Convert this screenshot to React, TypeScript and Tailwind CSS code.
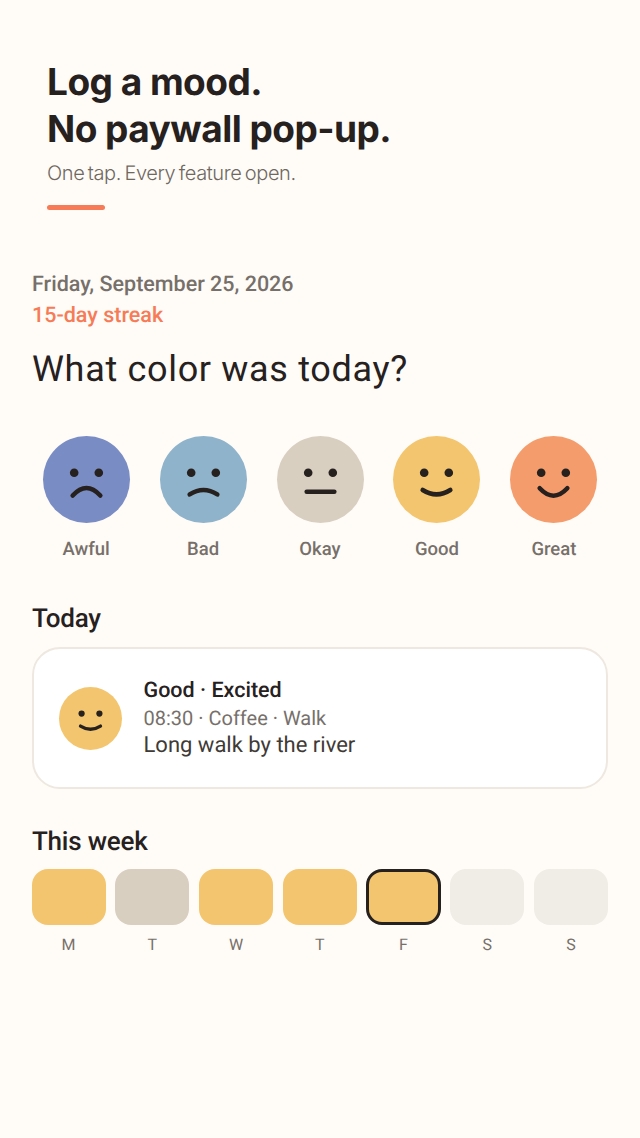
const MOUTHS: Record<string, string> = {
  Awful: "M-13.8 16 Q0 1 13.8 16",
  Bad: "M-13.8 14.9 Q0 6.1 13.8 14.9",
  Okay: "M-13.8 12.3 L13.8 12.3",
  Good: "M-13.8 10.5 Q0 19.3 13.8 10.5",
  Great: "M-13.8 8.8 Q0 23.6 13.8 8.8",
};

function Face({ mood, size }: { mood: string; size: number }) {
  return (
    <svg width={size} height={size} viewBox="-43.5 -43.5 87 87" className="block">
      <circle cx="-12.3" cy="-6.8" r="4.3" fill="#26211E" />
      <circle cx="12.3" cy="-6.8" r="4.3" fill="#26211E" />
      <path d={MOUTHS[mood]} fill="none" stroke="#26211E" strokeWidth="4.6" strokeLinecap="round" />
    </svg>
  );
}

const moods = [
  { name: "Awful", bg: "bg-[#7A8CC4]" },
  { name: "Bad", bg: "bg-[#8FB3CA]" },
  { name: "Okay", bg: "bg-[#D9CFC1]" },
  { name: "Good", bg: "bg-[#F3C56E]" },
  { name: "Great", bg: "bg-[#F49C6C]" },
];

const week = [
  { d: "M", bg: "bg-[#F3C56E]", ring: false },
  { d: "T", bg: "bg-[#D9CFC1]", ring: false },
  { d: "W", bg: "bg-[#F3C56E]", ring: false },
  { d: "T", bg: "bg-[#F3C56E]", ring: false },
  { d: "F", bg: "bg-[#F3C56E]", ring: true },
  { d: "S", bg: "bg-[#F0ECE6]", ring: false },
  { d: "S", bg: "bg-[#F0ECE6]", ring: false },
];

export default function App() {
  return (
    <div className="min-h-[1138px] w-[640px] bg-[#FFFCF8] font-['Roboto',sans-serif] text-[#26211E] [text-rendering:geometricPrecision]">
      <div className="pl-[47px] pr-[48px] pt-[58px]">
        <h1 className="font-['Inter',sans-serif] text-[37px] font-bold leading-[47px] tracking-[-0.52px]">
          Log a mood.
          <br />
          No paywall pop-up.
        </h1>
        <p className="mt-[7px] font-['Inter',sans-serif] text-[20px] font-light leading-[28px] tracking-[-0.4px] text-[#6F6860] [word-spacing:-1.75px]">
          One tap. Every feature open.
        </p>
        <div className="mt-[18px] h-[5px] w-[58px] rounded-full bg-[#F67B56]" />
      </div>

      <div className="px-[32px] pt-[60px]">
        <div className="text-[21.5px] font-medium leading-[30px] text-[#77706A]">Friday, September 25, 2026</div>
        <div className="mt-[1px] text-[21.5px] font-medium leading-[30px] text-[#F67B56]">15-day streak</div>
        <h2 className="mt-[15px] text-[36px] font-normal leading-[46px] tracking-[0.68px]">What color was today?</h2>

        <div className="mt-[44px] flex justify-between">
          {moods.map((m) => (
            <div key={m.name} className="flex w-[108.2px] flex-col items-center">
              <div className={`h-[87px] w-[87px] rounded-full ${m.bg}`}>
                <Face mood={m.name} size={87} />
              </div>
              <div className="mt-[12px] text-[18.5px] font-medium leading-[28px] text-[#77706A]">{m.name}</div>
            </div>
          ))}
        </div>

        <h3 className="mt-[38px] text-[26px] font-medium leading-[36px] tracking-[-0.26px]">Today</h3>
        <div className="mt-[10px] flex h-[142px] items-center rounded-[28px] border-2 border-[#EEE8E0] bg-white pl-[25px]">
          <div className="h-[63px] w-[63px] shrink-0 rounded-full bg-[#F3C56E]">
            <Face mood="Good" size={63} />
          </div>
          <div className="ml-[21.5px]">
            <div className="text-[21.5px] font-medium leading-[28.6px]">Good · Excited</div>
            <div className="text-[20px] leading-[26.4px] text-[#77706A]">08:30 · Coffee · Walk</div>
            <div className="text-[22px] leading-[28px] text-[#403A36]">Long walk by the river</div>
          </div>
        </div>

        <h3 className="mt-[35px] text-[26px] font-medium leading-[36px] tracking-[-0.22px]">This week</h3>
        <div className="-ml-[0.5px] mt-[9px] grid grid-cols-7 gap-[9.6px]">
          {week.map((w, i) => (
            <div key={i} className="flex flex-col items-center">
              <div className={`h-[56px] w-full rounded-[16px] ${w.bg} ${w.ring ? "border-[3px] border-[#26211E]" : ""}`} />
              <div className="mt-[9px] text-[16px] leading-[22px] text-[#77706A]">{w.d}</div>
            </div>
          ))}
        </div>
      </div>
    </div>
  );
}
